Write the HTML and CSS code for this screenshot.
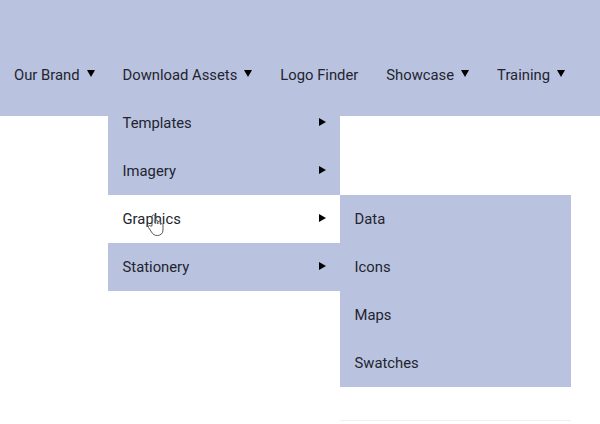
FILE: index.html
```html
<!DOCTYPE html>
<html lang="en">
<head>
<meta charset="utf-8">
<title>Menu</title>
<link rel="stylesheet" href="styles.css">
</head>
<body>
<nav class="bar">
  <ul class="menu">
    <li class="item"><span>Our Brand</span><svg class="down" viewBox="0 0 8 7"><path d="M0 0H8L4 7Z"/></svg></li>
    <li class="item item-open"><span>Download Assets</span><svg class="down" viewBox="0 0 8 7"><path d="M0 0H8L4 7Z"/></svg>
      <ul class="drop">
        <li class="row"><span>Templates</span><svg class="right" viewBox="0 0 7 8"><path d="M0 0L7 4L0 8Z"/></svg></li>
        <li class="row"><span>Imagery</span><svg class="right" viewBox="0 0 7 8"><path d="M0 0L7 4L0 8Z"/></svg></li>
        <li class="row row-active"><span>Graphics</span><svg class="right" viewBox="0 0 7 8"><path d="M0 0L7 4L0 8Z"/></svg>
          <svg class="cursor" viewBox="0 0 18 24"><path d="M5 13V3.500a1.500 1.500 0 0 1 3 0V10V8.500a1.400 1.400 0 0 1 2.800 0V11V9.500a1.400 1.400 0 0 1 2.800 0V11.500a1.300 1.300 0 0 1 2.400 0V17c0 3.500-2.500 5.500-5.500 5.500-3 0-4.500-1-6-3.500L1.500 14.500c-.8-1.500 1-2.700 2.200-1.500Z"/></svg>
          <div class="fly">
            <ul class="fly-list">
              <li class="fly-row">Data</li>
              <li class="fly-row">Icons</li>
              <li class="fly-row">Maps</li>
              <li class="fly-row">Swatches</li>
            </ul>
          </div>
        </li>
        <li class="row"><span>Stationery</span><svg class="right" viewBox="0 0 7 8"><path d="M0 0L7 4L0 8Z"/></svg></li>
      </ul>
    </li>
    <li class="item"><span>Logo Finder</span></li>
    <li class="item"><span>Showcase</span><svg class="down" viewBox="0 0 8 7"><path d="M0 0H8L4 7Z"/></svg></li>
    <li class="item"><span>Training</span><svg class="down" viewBox="0 0 8 7"><path d="M0 0H8L4 7Z"/></svg></li>
  </ul>
</nav>
</body>
</html>
```

FILE: styles.css
```css
* { box-sizing: border-box; }
html, body { margin: 0; padding: 0; }
body {
  background: #fff;
  color: #23242e;
  font-family: Roboto, "Liberation Sans", sans-serif;
  font-size: 14.8px;
  overflow: hidden;
  height: 424px;
}
ul { list-style: none; margin: 0; padding: 0; }
.bar {
  background: #b9c3e0;
  height: 116px;
  padding-top: 51px;
}
.menu { display: flex; }
.item {
  position: relative;
  display: flex;
  align-items: center;
  height: 48px;
  padding: 0 14px;
  white-space: nowrap;
}
.down {
  width: 8px;
  height: 7px;
  margin-left: 7px;
  margin-top: -3px;
  fill: #000;
}
.drop {
  position: absolute;
  left: -1px;
  top: 48px;
  width: 232px;
}
.row {
  position: relative;
  display: flex;
  align-items: center;
  justify-content: space-between;
  height: 48px;
  padding: 0 14px 0 15px;
  background: #b9c3e0;
}
.row-active { background: #fff; }
.right {
  width: 7px;
  height: 8px;
  margin-top: -3px;
  fill: #000;
}
.cursor {
  position: absolute;
  left: 39px;
  top: 18px;
  width: 18px;
  height: 24px;
  fill: #fff;
  fill-opacity: .35;
  stroke: #55565c;
  stroke-width: 1;
}
.fly {
  position: absolute;
  left: 232px;
  top: 0;
  width: 231px;
  height: 226px;
  border-bottom: 1px solid #f0f0f0;
}
.fly-list { background: #b9c3e0; }
.fly-row {
  display: flex;
  align-items: center;
  height: 48px;
  padding: 0 15px;
}
```
